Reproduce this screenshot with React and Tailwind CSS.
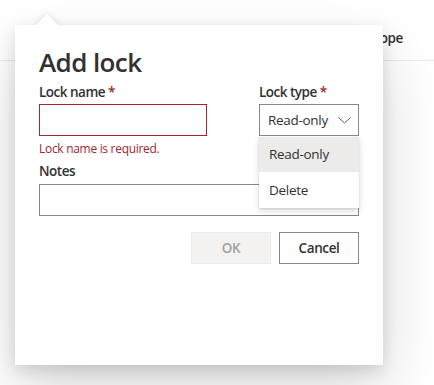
import React from "react";

export default function App() {
  return (
    <div className="relative w-[434px] h-[385px] bg-white overflow-hidden font-['Open_Sans',sans-serif] text-[#323130]">
      {/* background page */}
      <div className="flex justify-end h-[61px] pt-[28px] pr-[31px] border-b border-[#edebe9]">
        <span className="text-[13.5px] leading-[20px] font-semibold tracking-[-0.4px]">Scope</span>
      </div>

      {/* callout */}
      <div className="absolute left-[15px] top-[25px] w-[368px] h-[340px] bg-white shadow-[0_25.6px_57.6px_0_rgba(0,0,0,0.16),0_4.8px_14.4px_0_rgba(0,0,0,0.12)]">
        <div className="absolute left-[24px] top-[-8px] w-[16px] h-[16px] rotate-45 bg-white shadow-[0_0_6px_0_rgba(0,0,0,0.12)]" />
        <div className="relative h-full bg-white px-6 pt-[20px]">
          <h1 className="text-[26px] leading-[35px] font-semibold tracking-[-0.6px]">Add lock</h1>

          <div className="flex justify-between mt-[2px]">
            <div className="w-[168px]">
              <div className="text-[13.5px] leading-[20px] font-semibold tracking-[-0.5px]">
                Lock name <span className="text-[#a4262c]">*</span>
              </div>
              <div className="mt-[2px] h-[32px] border border-[#a4262c] bg-white" />
              <div className="pt-[5px] text-[12px] leading-[16px] tracking-[-0.3px] text-[#a4262c]">
                Lock name is required.
              </div>
            </div>
            <div className="w-[100px]">
              <div className="text-[13.5px] leading-[20px] font-semibold tracking-[-0.5px]">
                Lock type <span className="text-[#a4262c]">*</span>
              </div>
              <div className="mt-[2px] h-[32px] border border-[#8a8886] bg-white flex items-center justify-between pl-[8px] pr-[7px]">
                <span className="text-[13.5px] leading-[20px] tracking-[-0.3px]">Read-only</span>
                <svg width="13" height="7" viewBox="0 0 13 7" fill="none">
                  <path d="M0.5 0.5 L6.5 6 L12.5 0.5" stroke="#605e5c" strokeWidth="1" />
                </svg>
              </div>
            </div>
          </div>

          <div className="mt-[4px] text-[13.5px] leading-[20px] font-semibold tracking-[-0.5px]">Notes</div>
          <div className="mt-[3px] h-[32px] border border-[#8a8886] bg-white" />

          <div className="flex justify-end gap-2 mt-[16px]">
            <button className="w-20 h-8 bg-[#f3f2f1] border border-[#edebe9] text-[#a19f9d] text-[13.5px] font-semibold tracking-[-0.4px]">
              OK
            </button>
            <button className="w-20 h-8 bg-white border border-[#8a8886] text-[#323130] text-[13.5px] font-semibold tracking-[-0.4px]">
              Cancel
            </button>
          </div>

          {/* dropdown menu */}
          <div className="absolute left-[244px] top-[112px] w-[100px] bg-white shadow-[0_3.2px_7.2px_0_rgba(0,0,0,0.132),0_0.6px_1.8px_0_rgba(0,0,0,0.108)]">
            <div className="h-[35px] bg-[#edebe9] flex items-center pl-[10px] text-[13.5px] tracking-[-0.3px]">Read-only</div>
            <div className="h-[36px] flex items-center pl-[10px] text-[13.5px] tracking-[-0.3px]">Delete</div>
          </div>
        </div>
      </div>
    </div>
  );
}
